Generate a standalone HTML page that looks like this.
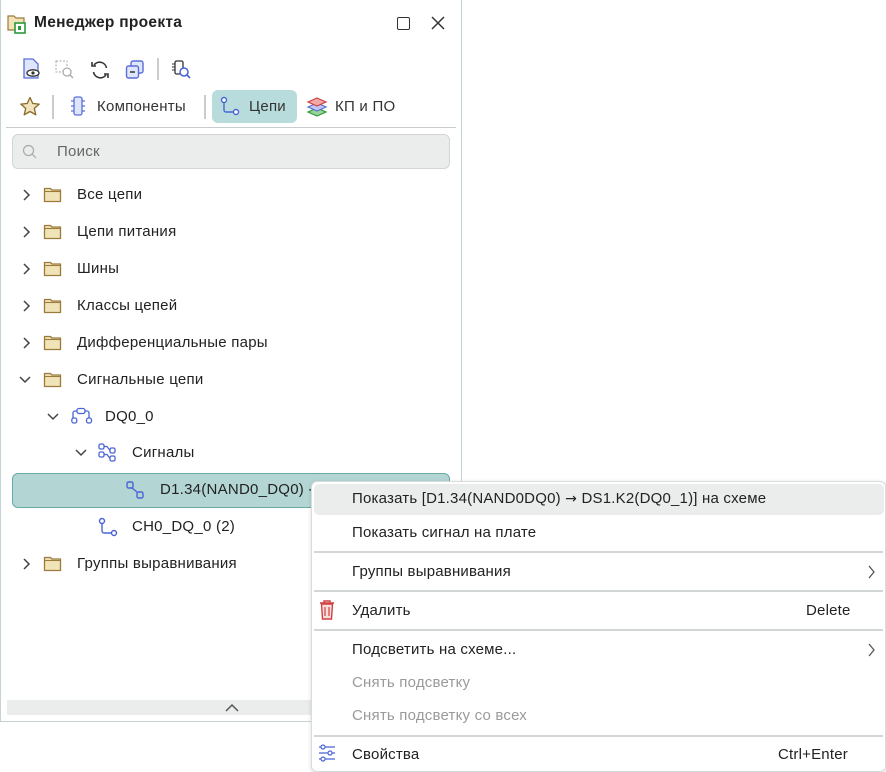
<!DOCTYPE html>
<html><head><meta charset="utf-8"><style>
*{margin:0;padding:0;box-sizing:border-box}
body{width:886px;height:772px;background:#fff;font-family:"Liberation Sans","DejaVu Sans",sans-serif;position:relative;overflow:hidden;color:#222}
.a{position:absolute}
.panel{left:0;top:0;width:462px;height:722px;border:1px solid #c5d3d3;border-top:none;background:#fff}
.t{font-size:15px;color:#222;white-space:nowrap;line-height:18px;letter-spacing:.25px}
.row{position:absolute;font-size:15px;line-height:18px;white-space:nowrap;color:#222;letter-spacing:.25px}
.menu{left:311px;top:481px;width:575px;height:291px;background:#fff;border:1px solid #d8dcdc;border-radius:6px;box-shadow:0 1px 4px rgba(0,0,0,.15)}
.mi{position:absolute;left:40px;font-size:15px;line-height:18px;white-space:nowrap;color:#222;letter-spacing:.2px}
.sep{position:absolute;left:2px;right:2px;height:2px;background:#d3d6d6}
.sc{position:absolute;font-size:15px;line-height:18px;color:#222;letter-spacing:.2px}
</style></head><body>
<div class="a panel"></div>
<svg class="a" style="left:7px;top:13px" width="20" height="22" viewBox="0 0 20 22"><path d="M1 3h6l2 2h8v12H1z" fill="#f1e3b8" stroke="#9b7b3a" stroke-width="1.2"/><rect x="8" y="10" width="10" height="10" fill="#fff" stroke="#2a9a3a" stroke-width="1.6"/><rect x="11" y="13" width="3" height="4" fill="#2a9a3a"/></svg>
<div class="a t" style="left:34px;top:14px;font-weight:bold;font-size:15.5px;letter-spacing:.3px">Менеджер проекта</div>
<div class="a" style="left:397px;top:17px;width:13px;height:13px;border:1.6px solid #333;border-radius:2px"></div>
<svg class="a" style="left:431px;top:16px" width="14" height="14"><path d="M1 1L13 13M13 1L1 13" stroke="#333" stroke-width="1.5"/></svg>
<svg class="a" style="left:22px;top:58px" width="20" height="22"><path d="M2 1h9l5 5v14H2z" fill="#dfe6fb" stroke="#5a6fd6" stroke-width="1.3"/><ellipse cx="11" cy="15" rx="6" ry="3.2" fill="#fff" stroke="#333" stroke-width="1.3"/><circle cx="11" cy="15" r="1.6" fill="#333"/></svg>
<svg class="a" style="left:55px;top:60px" width="20" height="20"><rect x="1" y="1" width="11" height="11" fill="none" stroke="#aaa" stroke-dasharray="2 1.5"/><circle cx="12" cy="12" r="4" fill="#fff" stroke="#aaa" stroke-width="1.3"/><path d="M15 15l3 3" stroke="#aaa" stroke-width="1.5"/></svg>
<svg class="a" style="left:90px;top:60px" width="20" height="20"><path d="M16.5 8A7 7 0 0 0 4 5M3.5 12A7 7 0 0 0 16 15" fill="none" stroke="#333" stroke-width="1.6"/><path d="M2 2v4h4M18 18v-4h-4" fill="none" stroke="#333" stroke-width="1.6"/></svg>
<svg class="a" style="left:125px;top:60px" width="20" height="20"><rect x="6" y="1" width="12" height="12" rx="2" fill="#dfe6fb" stroke="#5a6fd6" stroke-width="1.4"/><rect x="1.5" y="6" width="12" height="12" rx="2" fill="#dfe6fb" stroke="#5a6fd6" stroke-width="1.4"/><path d="M5 12h5" stroke="#333" stroke-width="1.5"/></svg>
<div class="a" style="left:157px;top:58px;width:2px;height:22px;background:#c9cccc"></div>
<svg class="a" style="left:171px;top:60px" width="22" height="20"><rect x="4" y="1" width="8" height="13" rx="1.5" fill="#fff" stroke="#333" stroke-width="1.3"/><path d="M1 4h3M1 7h3M1 10h3" stroke="#333"/><circle cx="13" cy="12" r="4" fill="#fff" stroke="#4a64d6" stroke-width="1.5"/><path d="M16 15l3 3" stroke="#4a64d6" stroke-width="1.6"/></svg>
<svg class="a" style="left:19px;top:96px" width="22" height="21"><path d="M11 1.5l2.8 6 6.4.6-4.9 4.3 1.5 6.4L11 15.5l-5.8 3.3 1.5-6.4L1.8 8.1l6.4-.6z" fill="#f2e2bd" stroke="#8a6a2a" stroke-width="1.3" stroke-linejoin="round"/></svg>
<div class="a" style="left:52px;top:95px;width:2px;height:24px;background:#c9cccc"></div>
<svg class="a" style="left:70px;top:96px" width="16" height="20"><rect x="4" y="1" width="8" height="18" rx="2" fill="#dfe6fb" stroke="#5a6fd6" stroke-width="1.3"/><path d="M1 5h3M1 10h3M1 15h3M12 5h3M12 10h3M12 15h3" stroke="#5a6fd6" stroke-width="1.3"/></svg>
<div class="a t" style="left:97px;top:98px;color:#333">Компоненты</div>
<div class="a" style="left:204px;top:95px;width:2px;height:24px;background:#c9cccc"></div>
<div class="a" style="left:212px;top:90px;width:85px;height:33px;background:#b8dcdb;border-radius:6px"></div>
<svg class="a" style="left:220px;top:96px" width="22" height="22"><circle cx="4" cy="4" r="2.5" fill="#fff" stroke="#4a64d6" stroke-width="1.4"/><circle cx="16" cy="16" r="2.5" fill="#fff" stroke="#4a64d6" stroke-width="1.4"/><path d="M4 6.5V14a2 2 0 0 0 2 2h7.5" fill="none" stroke="#4a64d6" stroke-width="1.4"/></svg>
<div class="a t" style="left:249px;top:98px;color:#333">Цепи</div>
<svg class="a" style="left:306px;top:95px" width="22" height="24"><path d="M2 17l9-4 9 4-9 4z" fill="#9ad29a" stroke="#2a9a3a" stroke-width="1.2"/><path d="M2 12l9-4 9 4-9 4z" fill="#bfc8f5" stroke="#5a6fd6" stroke-width="1.2"/><path d="M2 7l9-4 9 4-9 4z" fill="#f3a8a8" stroke="#d04040" stroke-width="1.2"/></svg>
<div class="a t" style="left:335px;top:98px;color:#333">КП и ПО</div>
<div class="a" style="left:6px;top:127px;width:450px;height:1px;background:#c9cccc"></div>
<div class="a" style="left:12px;top:134px;width:438px;height:35px;background:#ebedec;border:1px solid #d3d6d5;border-radius:6px"></div>
<svg class="a" style="left:22px;top:144px" width="16" height="16"><circle cx="6.5" cy="6.5" r="5" fill="none" stroke="#aaa" stroke-width="1.2"/><path d="M10 10l4 4" stroke="#aaa" stroke-width="1.2"/></svg>
<div class="a t" style="left:57px;top:143px;color:#666">Поиск</div>
<div class="a" style="left:12px;top:473px;width:438px;height:35px;background:#b3d6d5;border:1px solid #6aa9a6;border-radius:6px"></div>
<svg width="0" height="0" style="position:absolute"><defs>
<g id="f"><path d="M1.5 3.5h6l1.5 1.5h8.5v11.5h-16z" fill="#f1e3b8" stroke="#9b7b3a" stroke-width="1.3" stroke-linejoin="round"/><path d="M1.5 6.5h16" stroke="#9b7b3a" stroke-width="1.1"/></g>
<path id="cr" d="M2 1l5 5-5 5" fill="none" stroke="#444" stroke-width="1.5"/>
<path id="cd" d="M1 2l5 5 5-5" fill="none" stroke="#444" stroke-width="1.5"/>
</defs></svg>
<svg class="a" style="left:22px;top:189px" width="10" height="13"><use href="#cr"/></svg><svg class="a" style="left:43px;top:185px" width="20" height="19"><use href="#f"/></svg><div class="row" style="left:77px;top:186px">Все цепи</div>
<svg class="a" style="left:22px;top:226px" width="10" height="13"><use href="#cr"/></svg><svg class="a" style="left:43px;top:222px" width="20" height="19"><use href="#f"/></svg><div class="row" style="left:77px;top:223px">Цепи питания</div>
<svg class="a" style="left:22px;top:263px" width="10" height="13"><use href="#cr"/></svg><svg class="a" style="left:43px;top:259px" width="20" height="19"><use href="#f"/></svg><div class="row" style="left:77px;top:260px">Шины</div>
<svg class="a" style="left:22px;top:300px" width="10" height="13"><use href="#cr"/></svg><svg class="a" style="left:43px;top:296px" width="20" height="19"><use href="#f"/></svg><div class="row" style="left:77px;top:297px">Классы цепей</div>
<svg class="a" style="left:22px;top:337px" width="10" height="13"><use href="#cr"/></svg><svg class="a" style="left:43px;top:333px" width="20" height="19"><use href="#f"/></svg><div class="row" style="left:77px;top:334px">Дифференциальные пары</div>
<svg class="a" style="left:19px;top:375px" width="13" height="10"><use href="#cd"/></svg><svg class="a" style="left:43px;top:370px" width="20" height="19"><use href="#f"/></svg><div class="row" style="left:77px;top:371px">Сигнальные цепи</div>
<svg class="a" style="left:47px;top:412px" width="13" height="10"><use href="#cd"/></svg>
<svg class="a" style="left:71px;top:407px" width="22" height="18"><rect x="6" y="1.5" width="8" height="5" rx="2" fill="#fff" stroke="#4a64d6" stroke-width="1.3"/><path d="M6 4H4a2 2 0 0 0-2 2v6M14 4h2a2 2 0 0 1 2 2v6" fill="none" stroke="#4a64d6" stroke-width="1.3"/><rect x="0.8" y="11" width="5" height="5" rx="2" fill="#fff" stroke="#4a64d6" stroke-width="1.3"/><rect x="15.5" y="11" width="5" height="5" rx="2" fill="#fff" stroke="#4a64d6" stroke-width="1.3"/></svg>
<div class="row" style="left:105px;top:408px">DQ0_0</div>
<svg class="a" style="left:75px;top:448px" width="13" height="10"><use href="#cd"/></svg>
<svg class="a" style="left:98px;top:443px" width="20" height="20"><rect x="1" y="1" width="5" height="5" rx="1.5" fill="#fff" stroke="#4a64d6" stroke-width="1.3"/><rect x="1" y="9" width="5" height="5" rx="1.5" fill="#fff" stroke="#4a64d6" stroke-width="1.3"/><rect x="12" y="5" width="5" height="5" rx="1.5" fill="#fff" stroke="#4a64d6" stroke-width="1.3"/><rect x="12" y="13" width="5" height="5" rx="1.5" fill="#fff" stroke="#4a64d6" stroke-width="1.3"/><path d="M6 3.5h3l3 4M6 11.5h3l3 4" fill="none" stroke="#4a64d6" stroke-width="1.2"/></svg>
<div class="row" style="left:132px;top:444px">Сигналы</div>
<svg class="a" style="left:126px;top:481px" width="20" height="20"><rect x="1" y="1" width="6" height="6" rx="1.5" fill="none" stroke="#4a64d6" stroke-width="1.4"/><rect x="11" y="11" width="6" height="6" rx="1.5" fill="none" stroke="#4a64d6" stroke-width="1.4"/><path d="M6 7l5 4" stroke="#4a64d6" stroke-width="1.4"/></svg>
<div class="row" style="left:160px;top:481px">D1.34(NAND0_DQ0) -</div>
<svg class="a" style="left:98px;top:517px" width="22" height="22"><circle cx="4" cy="4" r="2.5" fill="#fff" stroke="#4a64d6" stroke-width="1.4"/><circle cx="16" cy="16" r="2.5" fill="#fff" stroke="#4a64d6" stroke-width="1.4"/><path d="M4 6.5V14a2 2 0 0 0 2 2h7.5" fill="none" stroke="#4a64d6" stroke-width="1.4"/></svg>
<div class="row" style="left:132px;top:518px">CH0_DQ_0 (2)</div>
<svg class="a" style="left:22px;top:558px" width="10" height="13"><use href="#cr"/></svg><svg class="a" style="left:43px;top:554px" width="20" height="19"><use href="#f"/></svg><div class="row" style="left:77px;top:555px">Группы выравнивания</div>
<div class="a" style="left:7px;top:700px;width:305px;height:15px;background:#ebedec"></div>
<svg class="a" style="left:224px;top:703px" width="16" height="10"><path d="M2 8l6-6 6 6" fill="none" stroke="#555" stroke-width="1.5"/></svg>
<div class="a menu">
<div class="a" style="left:2px;top:2px;width:570px;height:31px;background:#ebedec;border-radius:5px"></div>
<div class="mi" style="top:8px">Показать [D1.34(NAND0DQ0) <span style="font-family:'DejaVu Sans';font-size:14px">→</span> DS1.K2(DQ0_1)] на схеме</div>
<div class="mi" style="top:42px">Показать сигнал на плате</div>
<div class="sep" style="top:69px"></div>
<div class="mi" style="top:81px">Группы выравнивания</div>
<svg class="a" style="left:556px;top:83px" width="8" height="14"><path d="M1 1l5 6-5 6" fill="none" stroke="#555" stroke-width="1.3"/></svg>
<div class="sep" style="top:108px"></div>
<svg class="a" style="left:7px;top:117px" width="16" height="22"><path d="M1 4h14M5 4V2h6v2" fill="none" stroke="#d04040" stroke-width="1.4"/><path d="M2.5 5h11l-1 15h-9z" fill="#f8dede" stroke="#d04040" stroke-width="1.4"/><path d="M6 8v9M10 8v9" stroke="#d04040" stroke-width="1.2"/></svg>
<div class="mi" style="top:120px">Удалить</div>
<div class="sc" style="left:494px;top:120px">Delete</div>
<div class="sep" style="top:147px"></div>
<div class="mi" style="top:159px">Подсветить на схеме...</div>
<svg class="a" style="left:556px;top:161px" width="8" height="14"><path d="M1 1l5 6-5 6" fill="none" stroke="#555" stroke-width="1.3"/></svg>
<div class="mi" style="top:192px;color:#9a9a9a">Снять подсветку</div>
<div class="mi" style="top:225px;color:#9a9a9a">Снять подсветку со всех</div>
<div class="sep" style="top:253px"></div>
<svg class="a" style="left:6px;top:262px" width="18" height="18"><path d="M1 3h16M1 9h16M1 15h16" stroke="#4a64d6" stroke-width="1.2"/><circle cx="5" cy="3" r="2" fill="#fff" stroke="#4a64d6" stroke-width="1.2"/><circle cx="12" cy="9" r="2" fill="#fff" stroke="#4a64d6" stroke-width="1.2"/><circle cx="5" cy="15" r="2" fill="#fff" stroke="#4a64d6" stroke-width="1.2"/></svg>
<div class="mi" style="top:264px">Свойства</div>
<div class="sc" style="left:466px;top:264px">Ctrl+Enter</div>
</div>
</body></html>
